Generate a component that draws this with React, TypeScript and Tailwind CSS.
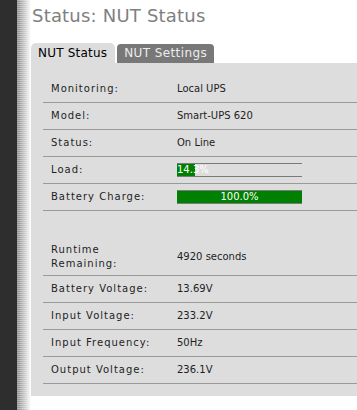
const rows: { label: string; value: string; bar?: number }[] = [
  { label: 'Monitoring:', value: 'Local UPS' },
  { label: 'Model:', value: 'Smart-UPS 620' },
  { label: 'Status:', value: 'On Line' },
  { label: 'Load:', value: '14.3%', bar: 14.3 },
  { label: 'Battery Charge:', value: '100.0%', bar: 100 },
];

const rows2: { label: string; value: string }[] = [
  { label: 'Battery Voltage:', value: '13.69V' },
  { label: 'Input Voltage:', value: '233.2V' },
  { label: 'Input Frequency:', value: '50Hz' },
  { label: 'Output Voltage:', value: '236.1V' },
];

function Bar({ pct, text }: { pct: number; text: string }) {
  return (
    <div className="w-[125px] h-[14px] border-y border-[#7a7a7a]">
      <div
        className="h-full bg-[#008000] text-white text-[10px] leading-[12px] text-center whitespace-nowrap"
        style={{ width: `${pct}%` }}
      >
        {text}
      </div>
    </div>
  );
}

function Row({ label, value, bar, tall }: { label: string; value: string; bar?: number; tall?: boolean }) {
  return (
    <div
      className={`flex items-center border-b border-[#9a9a9a] ${tall ? 'pt-[5px] pb-[4px]' : 'py-[6px]'}`}
    >
      <div className="w-[126px] shrink-0 px-2 text-[10px] leading-[14px] tracking-[1px] text-[#1e1e1e]">
        {label}
      </div>
      <div className="px-2 text-[10px] leading-[14px] text-[#1e1e1e]">
        {bar !== undefined ? <Bar pct={bar} text={value} /> : value}
      </div>
    </div>
  );
}

export default function App() {
  return (
    <div
      className="flex w-[357px] h-[410px] overflow-hidden bg-white"
      style={{ fontFamily: '"DejaVu Sans", sans-serif' }}
    >
      <div className="w-[17px] shrink-0 bg-[#2e2e2e]" />
      <div className="w-[14px] shrink-0 bg-[image:repeating-linear-gradient(0deg,transparent_0px,transparent_1px,rgba(255,255,255,0.3)_1px,rgba(255,255,255,0.3)_2px),linear-gradient(to_right,#8c8c8c,#ffffff)]" />
      <div className="flex-1 min-w-0">
        <h1 className="pt-[5px] pl-px text-[18px] leading-[21px] tracking-[0.2px] text-[#808080] whitespace-nowrap">
          Status: NUT Status
        </h1>
        <div className="mt-[17px] flex items-end gap-[2px]">
          <div className="h-[20px] pl-[7px] pr-[8px] pt-[3px] rounded-t-[5px] bg-[#dddddd] text-[12px] leading-[14px] tracking-[0.2px] text-black">
            NUT Status
          </div>
          <div className="h-[19px] px-[7px] pt-[2px] rounded-t-[4px] bg-[#787878] text-[12px] leading-[14px] text-[#ececec] tracking-[0.4px]">
            NUT Settings
          </div>
        </div>
        <div className="bg-[#dddddd] pl-[12px] pt-[13px] pb-[12px]">
          {rows.map((r) => (
            <Row key={r.label} {...r} />
          ))}
          <div className="h-[27px]" />
          <Row label="Runtime Remaining:" value="4920 seconds" tall />
          {rows2.map((r) => (
            <Row key={r.label} {...r} />
          ))}
        </div>
      </div>
    </div>
  );
}
